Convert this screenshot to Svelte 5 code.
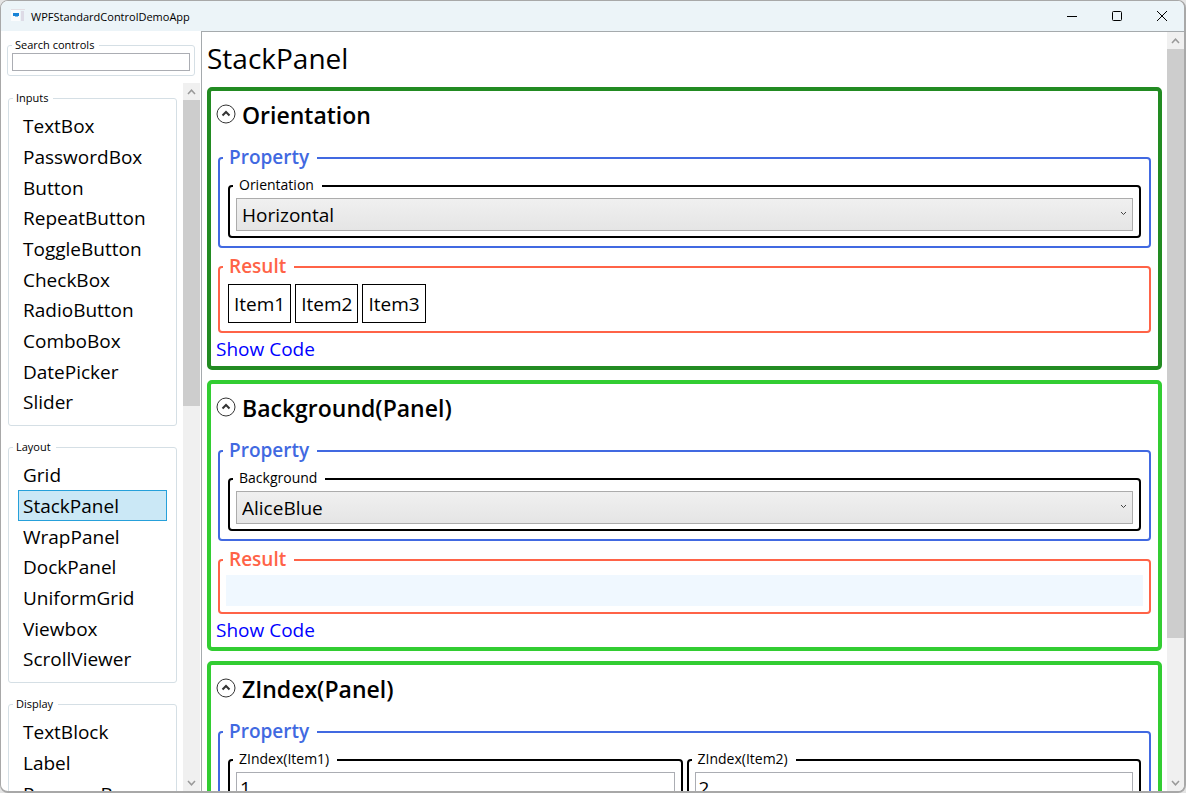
<script>
  /**
   * WPFStandardControlDemoApp - control browser with a grouped list on the left
   * and the demo cards of the selected control on the right
   */
  const groups = [
    {
      name: 'Inputs',
      items: [
        'TextBox', 'PasswordBox', 'Button', 'RepeatButton', 'ToggleButton',
        'CheckBox', 'RadioButton', 'ComboBox', 'DatePicker', 'Slider'
      ]
    },
    {
      name: 'Layout',
      items: ['Grid', 'StackPanel', 'WrapPanel', 'DockPanel', 'UniformGrid', 'Viewbox', 'ScrollViewer']
    },
    {
      name: 'Display',
      items: ['TextBlock', 'Label', 'ProgressBar']
    }
  ];

  let search = $state('');
  let selected = $state('StackPanel');
  let orientation = $state('Horizontal');
  let background = $state('AliceBlue');
  let zIndexes = $state([1, 2]);
</script>

{#snippet scrollbar(size)}
  <div class="scrollbar">
    <button class="scroll-button" aria-label="Scroll up">
      <svg width="9" height="6" viewBox="0 0 9 6"><path d="M1 5 4.5 1.2 8 5" /></svg>
    </button>
    <div class="track">
      <div class="thumb" style="height: {size}%"></div>
    </div>
    <button class="scroll-button" aria-label="Scroll down">
      <svg width="9" height="6" viewBox="0 0 9 6"><path d="M1 1 4.5 4.8 8 1" /></svg>
    </button>
  </div>
{/snippet}

{#snippet header(title)}
  <button class="expander">
    <svg width="20" height="20" viewBox="0 0 20 20">
      <circle cx="10" cy="10" r="9" />
      <path d="M6.5 11.5 10 8l3.5 3.5" />
    </svg>
    <span>{title}</span>
  </button>
{/snippet}

{#snippet chevron()}
  <svg class="chevron" width="7" height="5" viewBox="0 0 7 5"><path d="M1 1 3.5 3.5 6 1" /></svg>
{/snippet}

<div class="window">
  <header class="titlebar">
    <svg class="app-icon" width="14" height="14" viewBox="0 0 14 14">
      <rect x="0" y="1" width="9" height="11" fill="#fbfcfd" />
      <rect x="0" y="0" width="14" height="1" fill="#e3dfe4" />
      <rect x="10" y="2" width="3" height="10" fill="#dddbe6" />
      <rect x="2" y="4" width="6" height="3" fill="#1883d7" />
      <rect x="4" y="7" width="3" height="1" fill="#7dbbe8" />
    </svg>
    <span class="app-name">WPFStandardControlDemoApp</span>
    <div class="caption-buttons">
      <button aria-label="Minimize">
        <svg width="12" height="12" viewBox="0 0 12 12"><path d="M1 6.5h10" /></svg>
      </button>
      <button aria-label="Maximize">
        <svg width="12" height="12" viewBox="0 0 12 12"><rect x="1.5" y="1.5" width="9" height="9" rx="1" /></svg>
      </button>
      <button aria-label="Close">
        <svg width="12" height="12" viewBox="0 0 12 12"><path d="m1 1 10 10M11 1 1 11" /></svg>
      </button>
    </div>
  </header>

  <div class="body">
    <aside class="sidebar">
      <fieldset class="group search">
        <legend><label for="search">Search controls</label></legend>
        <input id="search" type="text" bind:value={search} />
      </fieldset>

      <div class="scroll-area">
        <nav class="list">
          {#each groups as group}
            <fieldset class="group">
              <legend>{group.name}</legend>
              {#each group.items as item}
                <a
                  class="item"
                  class:selected={item === selected}
                  href="#{item}"
                  onclick={() => (selected = item)}>{item}</a>
              {/each}
            </fieldset>
          {/each}
        </nav>
        {@render scrollbar(45.4)}
      </div>
    </aside>

    <main class="main">
      <div class="page">
        <h1>StackPanel</h1>

        <section class="card own">
          {@render header('Orientation')}
          <fieldset class="box property">
            <legend>Property</legend>
            <fieldset class="box field">
              <legend><label for="orientation">Orientation</label></legend>
              <div class="combo">
                <select id="orientation" bind:value={orientation}>
                  <option>Horizontal</option>
                  <option>Vertical</option>
                </select>
                {@render chevron()}
              </div>
            </fieldset>
          </fieldset>
          <fieldset class="box result">
            <legend>Result</legend>
            <div class="stack" class:vertical={orientation === 'Vertical'}>
              <div class="stack-item">Item1</div>
              <div class="stack-item">Item2</div>
              <div class="stack-item">Item3</div>
            </div>
          </fieldset>
          <a class="show-code" href="#code">Show Code</a>
        </section>

        <section class="card">
          {@render header('Background(Panel)')}
          <fieldset class="box property">
            <legend>Property</legend>
            <fieldset class="box field">
              <legend><label for="background">Background</label></legend>
              <div class="combo">
                <select id="background" bind:value={background}>
                  <option>AliceBlue</option>
                  <option>LightGreen</option>
                  <option>Transparent</option>
                </select>
                {@render chevron()}
              </div>
            </fieldset>
          </fieldset>
          <fieldset class="box result">
            <legend>Result</legend>
            <div class="swatch" style="background: {background}"></div>
          </fieldset>
          <a class="show-code" href="#code">Show Code</a>
        </section>

        <section class="card">
          {@render header('ZIndex(Panel)')}
          <fieldset class="box property">
            <legend>Property</legend>
            <div class="columns">
              {#each zIndexes as _, i}
                <fieldset class="box field">
                  <legend><label for="zindex{i}">ZIndex(Item{i + 1})</label></legend>
                  <input id="zindex{i}" type="text" bind:value={zIndexes[i]} />
                </fieldset>
              {/each}
            </div>
          </fieldset>
        </section>
      </div>
      {@render scrollbar(81.3)}
    </main>
  </div>
</div>

<style>
  :global(body) {
    margin: 0;
    background: #e4e4e4;
  }

  .window {
    box-sizing: border-box;
    display: flex;
    flex-direction: column;
    height: 100vh;
    border: 1px solid #a8a8a8;
    border-right-width: 2px;
    border-bottom-width: 2px;
    border-radius: 8px;
    background: #fff;
    color: #000;
    font-family: 'Segoe UI', 'Open Sans', 'Noto Sans', sans-serif;
    font-size: 19px;
    overflow: hidden;
  }

  button,
  input,
  select {
    box-sizing: border-box;
    margin: 0;
    padding: 0;
    border: none;
    border-radius: 0;
    background: none;
    color: inherit;
    font: inherit;
  }

  svg {
    fill: none;
    stroke: #000;
  }

  fieldset {
    margin: 0;
    min-width: 0;
  }

  a {
    text-decoration: none;
  }

  /* title bar */
  .titlebar {
    display: flex;
    flex: none;
    align-items: center;
    height: 30px;
    padding-left: 10px;
    background: #ecf4f8;
  }

  .app-icon {
    stroke: none;
  }

  .app-name {
    flex: 1;
    padding-left: 6px;
    font-size: 11px;
  }

  .caption-buttons {
    display: flex;
  }

  .caption-buttons button {
    display: flex;
    align-items: center;
    justify-content: center;
    width: 45px;
    height: 30px;
  }

  .body {
    display: flex;
    flex: 1;
    min-height: 0;
  }

  /* control list */
  .sidebar {
    display: flex;
    flex: none;
    flex-direction: column;
    width: 200px;
  }

  .group {
    padding: 4px 9px 8px;
    border: 1px solid #d5dfe5;
    border-radius: 3px;
  }

  .group legend {
    margin-left: -5px;
    padding: 0 5px 0 3px;
    font-size: 11px;
    line-height: 16px;
  }

  .search {
    margin: 6px 6px 7px;
    padding: 0 4px 4px;
  }

  .search legend {
    margin-left: 0;
  }

  .search input {
    display: block;
    width: 100%;
    height: 18px;
    padding: 0 2px;
    border: 1px solid #abadb3;
    font-size: 11px;
  }

  .scroll-area {
    display: flex;
    flex: 1;
    min-height: 0;
    padding-right: 1px;
  }

  .list {
    display: flex;
    flex: 1;
    flex-direction: column;
    gap: 13px;
    padding: 7px 6px 0 7px;
    overflow: hidden;
  }

  .list .group {
    flex: none;
  }

  .item {
    box-sizing: border-box;
    display: block;
    height: 31px;
    padding: 0 4px;
    border: 1px solid transparent;
    color: #000;
    line-height: 30px;
  }

  .item:nth-of-type(3n) {
    height: 30px;
  }

  .item.selected {
    border-color: #26a0da;
    background: #cbe8f6;
  }

  /* scroll bars */
  .scrollbar {
    display: flex;
    flex: none;
    flex-direction: column;
    width: 17px;
    background: #f0f0f0;
  }

  .scroll-button {
    display: flex;
    align-items: center;
    justify-content: center;
    height: 17px;
  }

  .scroll-button svg {
    stroke: #999;
    stroke-width: 1.5;
  }

  .track {
    flex: 1;
  }

  .thumb {
    background: #cdcdcd;
  }

  /* demo page */
  .main {
    display: flex;
    flex: 1;
    min-width: 0;
    border-top: 1px solid #a5aaad;
    border-left: 1px solid #a5aaad;
  }

  .page {
    flex: 1;
    min-width: 0;
    padding: 5px;
    overflow: hidden;
  }

  h1 {
    margin: 0 0 8px;
    font-size: 28px;
    font-weight: 400;
    line-height: 42px;
  }

  .card {
    margin-bottom: 10px;
    padding: 8px 7px 4px;
    border: 4px solid limegreen;
    border-radius: 5px;
  }

  .card.own {
    border-color: forestgreen;
  }

  .expander {
    display: flex;
    gap: 6px;
    margin: 0 0 14px -2px;
    font-size: 23px;
    font-weight: 600;
    line-height: 32px;
  }

  .expander svg {
    margin-top: 5px;
    stroke: #333;
  }

  .expander path {
    stroke-width: 2;
  }

  .box {
    border: 2px solid #000;
    border-radius: 4px;
  }

  .box legend {
    padding: 0 8px 2px 6px;
    font-weight: 600;
    line-height: 24px;
  }

  .property {
    margin-bottom: 6px;
    padding: 5px 8px 8px;
    border-color: royalblue;
  }

  .property > legend {
    margin-left: -5px;
    color: royalblue;
  }

  .box.field {
    padding: 2px 6px 5px;
  }

  .field legend {
    margin-left: -3px;
    font-size: 14px;
    font-weight: 400;
    line-height: 18px;
  }

  .combo {
    position: relative;
  }

  .combo select {
    display: block;
    width: 100%;
    height: 33px;
    padding: 0 5px;
    border: 1px solid #acacac;
    background: linear-gradient(#f0f0f0, #e5e5e5);
    appearance: none;
  }

  .chevron {
    position: absolute;
    top: 13px;
    right: 6px;
    stroke: #444;
    pointer-events: none;
  }

  .field input {
    display: block;
    width: 100%;
    height: 31px;
    padding: 0 3px;
    border: 1px solid #abadb3;
  }

  .columns {
    display: grid;
    grid-template-columns: 1fr 1fr;
    gap: 4px;
  }

  .result {
    margin-bottom: 3px;
    padding: 2px 6px 6px;
    border-color: tomato;
  }

  .result legend {
    margin-left: -3px;
    color: tomato;
  }

  .stack {
    display: flex;
  }

  .stack.vertical {
    flex-direction: column;
  }

  .stack-item {
    margin: 2px;
    padding: 6px 5px 4px;
    border: 1px solid #000;
    line-height: 27px;
  }

  .swatch {
    height: 31px;
  }

  .show-code {
    display: block;
    margin-left: -2px;
    color: #00f;
    line-height: 26px;
  }
</style>
